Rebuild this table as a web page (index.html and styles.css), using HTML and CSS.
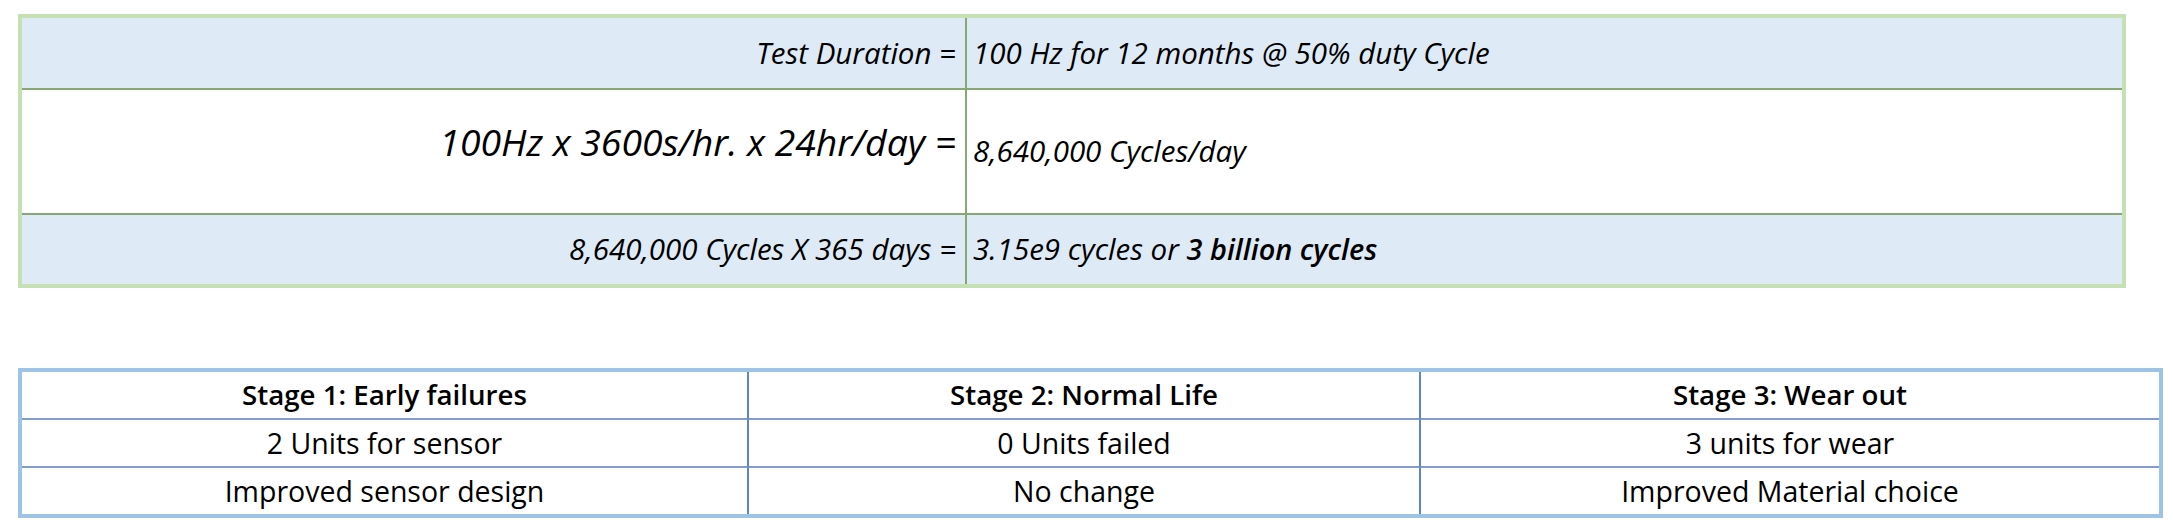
FILE: index.html
```html
<!DOCTYPE html>
<html>
<head>
<meta charset="utf-8">
<link rel="stylesheet" href="styles.css">
</head>
<body>
<div class="page">
  <table class="calc">
    <colgroup><col class="calc-left"><col></colgroup>
    <tr class="r1 shaded">
      <td class="lbl">Test Duration =</td>
      <td class="val">100 Hz for 12 months @ 50% duty Cycle</td>
    </tr>
    <tr class="r2">
      <td class="lbl big">100Hz x 3600s/hr. x 24hr/day =</td>
      <td class="val">8,640,000 Cycles/day</td>
    </tr>
    <tr class="r3 shaded">
      <td class="lbl">8,640,000 Cycles X 365 days =</td>
      <td class="val">3.15e9 cycles or <b>3 billion cycles</b></td>
    </tr>
  </table>

  <table class="stages">
    <colgroup><col class="s1"><col class="s2"><col></colgroup>
    <tr class="hd">
      <th>Stage 1: Early failures</th>
      <th>Stage 2: Normal Life</th>
      <th>Stage 3: Wear out</th>
    </tr>
    <tr class="mid">
      <td>2 Units for sensor</td>
      <td>0 Units failed</td>
      <td>3 units for wear</td>
    </tr>
    <tr class="last">
      <td>Improved sensor design</td>
      <td>No change</td>
      <td>Improved Material choice</td>
    </tr>
  </table>
</div>
</body>
</html>
```

FILE: styles.css
```css
html, body {
  margin: 0;
  padding: 0;
  background: #ffffff;
}

.page {
  padding: 14px 0 0 18px;
  font-family: "Open Sans", "Noto Sans", sans-serif;
  color: #000;
}

table {
  border-collapse: separate;
  border-spacing: 0;
  table-layout: fixed;
  box-sizing: border-box;
}

td, th {
  padding: 0;
  vertical-align: middle;
  white-space: nowrap;
}

/* ---------- calculation table ---------- */
.calc {
  width: 2108px;
  border: 4px solid #c5e0b3;
  font-size: 29.5px;
  font-style: italic;
  line-height: 1.36;
}

.calc-left { width: 945px; }

.calc .shaded td { background: #deeaf6; }

.calc .lbl {
  text-align: right;
  padding-right: 9px;
  border-right: 2px solid #86a874;
}

.calc .val {
  text-align: left;
  padding-left: 6px;
}

.calc .r1 td,
.calc .r2 td { border-bottom: 2px solid #86a874; }

.calc .r1 { height: 72px; }
.calc .r2 { height: 125px; }
.calc .r3 { height: 69px; }

.calc .big {
  font-size: 37.33px;
  padding-bottom: 18px;
}

.calc b {
  font-weight: 600;
  font-size: 28.9px;
}

/* ---------- stages table ---------- */
.stages {
  margin-top: 80px;
  width: 2145px;
  border: 4px solid #9dc3e6;
  font-size: 28.5px;
  line-height: 1.36;
  text-align: center;
}

.s1 { width: 727px; }
.s2 { width: 672px; }

.stages th {
  font-weight: 600;
  font-size: 27.7px;
}

.stages th:not(:last-child),
.stages td:not(:last-child) { border-right: 2px solid #5f87b3; }

.stages .hd th,
.stages .mid td { border-bottom: 2px solid #7f9fc6; }

.stages .hd { height: 48px; }
.stages .mid { height: 48px; }
.stages .last { height: 46px; }
```
